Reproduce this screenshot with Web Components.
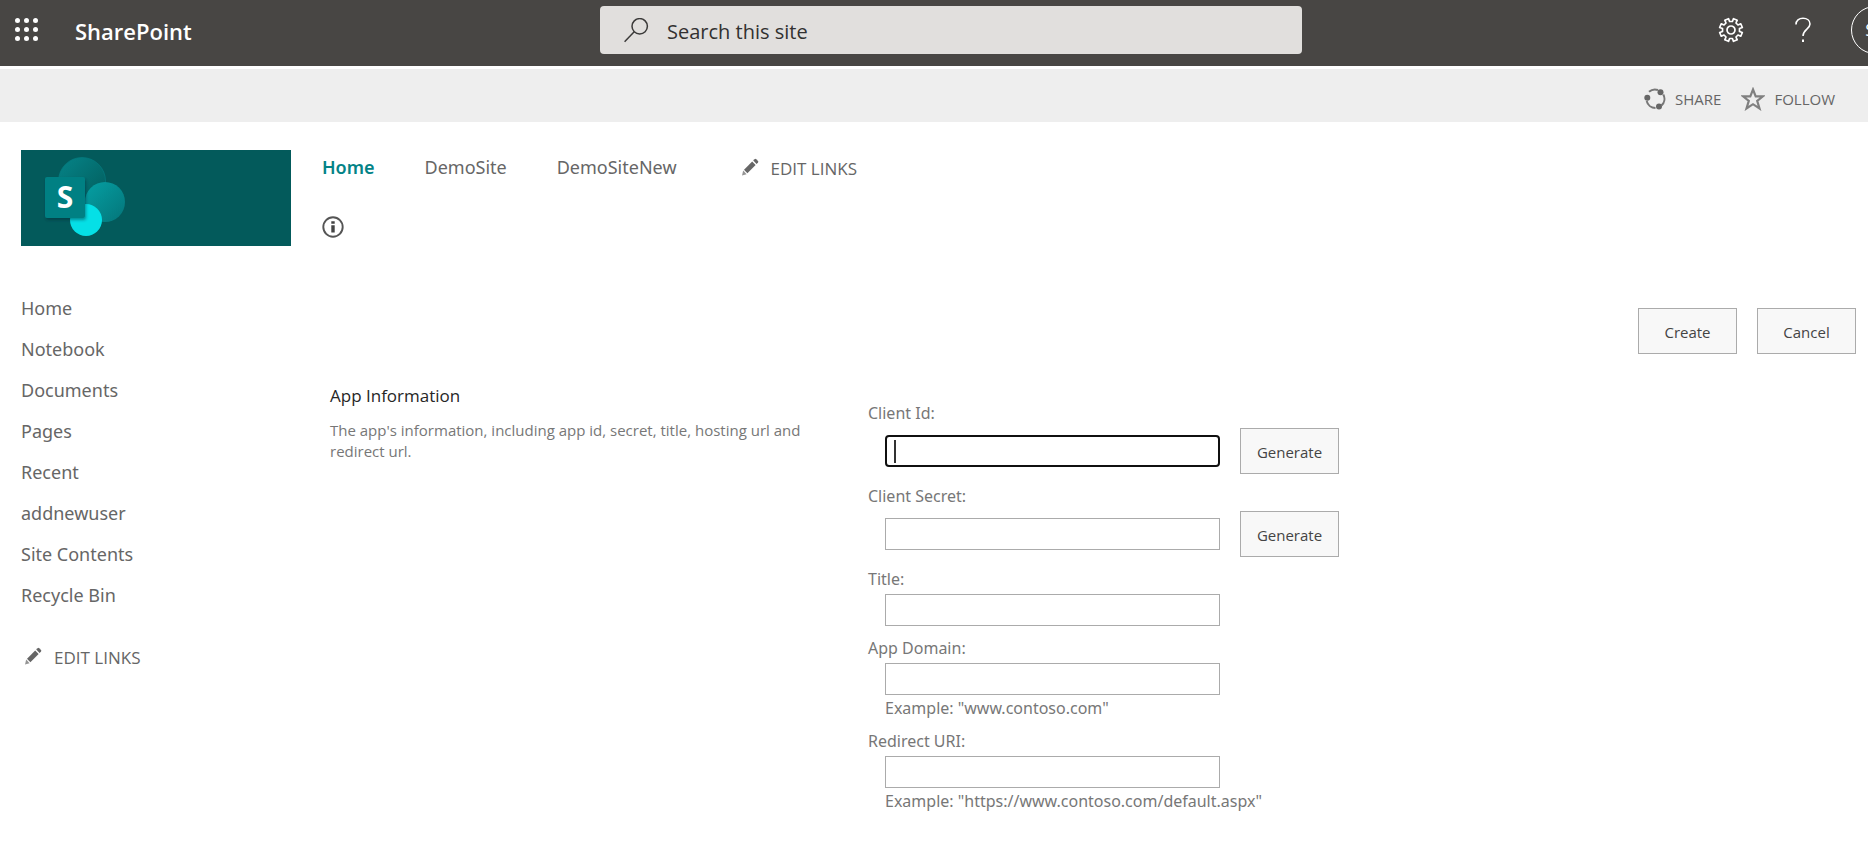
<!DOCTYPE html>
<html lang="en">
<head>
<meta charset="utf-8">
<title>SharePoint</title>
<style>
  body { margin: 0; background: #fff; color: #666; font-family: "Open Sans", "Noto Sans", sans-serif; font-size: 16px; line-height: 22px; }
</style>
</head>
<body>
<sp-page></sp-page>

<script>
const define = (name, html, setup) => {
  const template = document.createElement('template');
  template.innerHTML = '<style>*{box-sizing:border-box}a{color:inherit;text-decoration:none}button,input{font:inherit;color:inherit;margin:0}svg{display:block;flex:none}</style>' + html;
  customElements.define(name, class extends HTMLElement {
    constructor() {
      super();
      this.attachShadow({ mode: 'open' }).append(template.content.cloneNode(true));
    }
    connectedCallback() { if (setup) setup(this, this.shadowRoot); }
  });
};

define('sp-button', `
  <style>
    :host { display: block; font-family: "Open Sans", sans-serif; }
    button { display: block; width: 99px; height: 46px; padding: 2px 0 0; border: 1px solid #ababab; background: #f8f8f8; color: #444; font-size: 15px; line-height: 22px; }
  </style>
  <button type="button"><slot></slot></button>`);

define('sp-edit-links', `
  <style>
    :host { display: block; font-family: "Open Sans", sans-serif; font-size: 17px; line-height: 24px; }
    a { display: flex; align-items: center; gap: 12px; }
    svg { margin-bottom: 4px; }
  </style>
  <a href="#edit">
    <svg width="17" height="18" viewBox="0 0 17 18" fill="#666"><path d="M0 17.5 1.2 12.6 4.6 16.2Z" opacity=".7"/><path d="M2 11.7 10.2 3.6 13.6 7 5.4 15.2Z"/><path d="M11.2 2.6 12.6 1.2Q13.4.5 14.2 1.2L16 3Q16.7 3.8 16 4.6L14.6 6Z"/></svg>
    <span>EDIT LINKS</span>
  </a>`);

define('sp-field', `
  <style>
    :host { display: block; color: #777; font-family: "Noto Sans", sans-serif; }
    label { display: block; line-height: 22px; margin-bottom: 4px; }
    .row { display: flex; align-items: center; gap: 20px; padding-left: 17px; }
    input { display: block; width: 335px; height: 32px; padding: 0 8px; border: 1px solid #ababab; background: #fff; }
    :host([active]) input { border: 2px solid #101010; border-radius: 4px; caret-color: transparent; outline: 0;
      background: linear-gradient(#333, #333) 7px center / 2px 23px no-repeat #fff; }
    .hint { padding-left: 17px; margin-top: 2px; line-height: 22px; }
    .hint:empty { display: none; }
  </style>
  <label for="box"></label>
  <div class="row"><input id="box" type="text"><slot></slot></div>
  <div class="hint"></div>`,
  (host, root) => {
    root.querySelector('label').textContent = host.getAttribute('label');
    root.querySelector('.hint').textContent = host.getAttribute('hint') || '';
  });

define('sp-suite-bar', `
  <style>
    :host { display: grid; grid-template-columns: 600fr 702fr 566fr; align-items: center; height: 66px; background: #484644; color: #fff; overflow: hidden; }
    .brand { display: flex; align-items: center; padding: 0 0 6px 15px; gap: 36px; }
    .brand a { font-size: 22px; line-height: 30px; font-weight: 600; padding-top: 2px; }
    button { display: flex; align-items: center; justify-content: center; padding: 0; border: 0; background: none; }
    form { display: flex; align-items: center; gap: 18px; height: 48px; margin: 0 0 6px; padding: 0 24px; border-radius: 4px; background: #e1dfdd; color: #323130; }
    input { flex: 1; min-width: 0; height: 40px; padding: 2px 0 0; border: 0; outline: 0; background: none; font-size: 20px; }
    input::placeholder { color: #323130; opacity: 1; }
    .tools { display: flex; justify-content: flex-end; margin: 0 -43px 6px 0; }
    .tools button { width: 72px; height: 48px; }
    .avatar { width: 48px; height: 48px; border: 1px solid #fff; border-radius: 50%; font-size: 17px; line-height: 46px; text-align: center; }
  </style>
  <div class="brand">
    <button type="button" aria-label="App launcher"><svg width="24" height="24" viewBox="0 0 24 24" fill="#fff"><circle cx="2.5" cy="2.5" r="2.5"/><circle cx="11.5" cy="2.5" r="2.5"/><circle cx="20.5" cy="2.5" r="2.5"/><circle cx="2.5" cy="11.5" r="2.5"/><circle cx="11.5" cy="11.5" r="2.5"/><circle cx="20.5" cy="11.5" r="2.5"/><circle cx="2.5" cy="20.5" r="2.5"/><circle cx="11.5" cy="20.5" r="2.5"/><circle cx="20.5" cy="20.5" r="2.5"/></svg></button>
    <a href="#sharepoint">SharePoint</a>
  </div>
  <form role="search">
    <svg width="25" height="25" viewBox="0 0 25 25" fill="none" stroke="#3b3a39" stroke-width="1.5"><circle cx="15.7" cy="8.3" r="7.7"/><path d="M10.2 13.8.6 23.7"/></svg>
    <input type="search" aria-label="Search this site" placeholder="Search this site">
  </form>
  <div class="tools">
    <button type="button" aria-label="Settings"><svg id="gear" width="26" height="26" viewBox="-13 -13 26 26" fill="none" stroke="#fff" stroke-width="1.7" stroke-linejoin="round"><path/><circle r="4"/></svg></button>
    <button type="button" aria-label="Help"><svg width="16" height="26" viewBox="0 0 16 26" fill="none" stroke="#fff" stroke-width="1.6"><path d="M1 7.5C1 3.5 4 1.3 8 1.3S15 3.5 15 7C15 12 8 12.3 8 19"/><path d="M8 22.5V25" stroke-width="2"/></svg></button>
    <button type="button" aria-label="Account"><span class="avatar">SP</span></button>
  </div>`,
  (host, root) => {
    // Eight flat-topped teeth around the hub.
    const points = [];
    for (let i = 0; i < 8; i++) {
      for (const [offset, radius] of [[-13, 8.6], [-10, 11.6], [10, 11.6], [13, 8.6]]) {
        const angle = (i * 45 + 22.5 + offset) * Math.PI / 180;
        points.push((radius * Math.cos(angle)).toFixed(2) + ' ' + (radius * Math.sin(angle)).toFixed(2));
      }
    }
    root.querySelector('#gear path').setAttribute('d', 'M' + points.join('L') + 'Z');
  });

define('sp-ribbon', `
  <style>
    :host { display: flex; justify-content: flex-end; align-items: center; gap: 20px; height: 53px; margin-top: 3px; padding: 7px 33px 0 0; background: #eee; font-size: 15px; }
    a { display: flex; align-items: center; gap: 9px; }
  </style>
  <a href="#share"><svg width="22" height="22" viewBox="0 0 22 22" fill="none" stroke="#777" stroke-width="2"><path d="M5 3.8A9 9 0 0 1 14 2M19.3 6.5A9 9 0 0 1 17.5 17.5M11.5 20A9 9 0 0 1 2.7 13"/><g fill="#666" stroke="none"><circle cx="16.5" cy="4.2" r="3"/><circle cx="3.3" cy="9.7" r="3"/><circle cx="15" cy="18.5" r="3"/></g></svg><span>SHARE</span></a>
  <a href="#follow"><svg width="24" height="24" viewBox="0 0 24 24" fill="none" stroke="#808080" stroke-width="2.2"><path d="M12 2.5 14.7 9.3H22L16.2 13.9 18.5 21.5 12 17.2 5.5 21.5 7.8 13.9 2 9.3H9.3Z"/></svg><span>FOLLOW</span></a>`);

define('sp-logo', `
  <style>
    :host { display: block; height: 96px; background: #035a5b; }
    a { display: block; }
  </style>
  <a href="#home" aria-label="Site home">
    <svg width="110" height="96" viewBox="0 0 110 96">
      <defs>
        <linearGradient id="a" x1="0" y1="0" x2="1" y2="1"><stop stop-color="#058488"/><stop offset=".75" stop-color="#036566"/></linearGradient>
        <linearGradient id="b" x1="0" y1="0" x2="1" y2="1"><stop stop-color="#05a0a4"/><stop offset="1" stop-color="#047579"/></linearGradient>
        <filter id="s" x="-20%" y="-20%" width="150%" height="150%"><feDropShadow dx="1" dy="2" stdDeviation="1.5" flood-color="#023" flood-opacity=".45"/></filter>
      </defs>
      <circle cx="61" cy="31" r="23.5" fill="url(#a)" stroke="#047b7f" stroke-width=".7"/>
      <circle cx="84" cy="52" r="20" fill="url(#b)"/>
      <circle cx="65" cy="70" r="16" fill="#05e0e6"/>
      <rect x="24" y="27" width="40" height="41" rx="2" fill="#048083" filter="url(#s)"/>
      <text x="44" y="58" text-anchor="middle" font-size="30" font-weight="700" fill="#fff">S</text>
    </svg>
  </a>`);

define('sp-side-nav', `
  <style>
    :host { display: block; margin-top: 42px; font-family: "Noto Sans", sans-serif; font-size: 18px; line-height: 41px; }
    ul { margin: 0 0 30px; padding: 0; list-style: none; }
    sp-edit-links { padding-left: 4px; }
  </style>
  <nav>
    <ul>
      <li><a href="#home">Home</a></li><li><a href="#notebook">Notebook</a></li><li><a href="#documents">Documents</a></li><li><a href="#pages">Pages</a></li>
      <li><a href="#recent">Recent</a></li><li><a href="#addnewuser">addnewuser</a></li><li><a href="#contents">Site Contents</a></li><li><a href="#bin">Recycle Bin</a></li>
    </ul>
    <sp-edit-links></sp-edit-links>
  </nav>`);

define('sp-top-nav', `
  <style>
    :host { display: block; font-family: "Noto Sans", sans-serif; font-size: 18px; line-height: 24px; }
    nav { display: flex; align-items: flex-start; gap: 50px; padding-top: 5px; }
    nav a[aria-current] { color: #038387; font-weight: 600; }
    sp-edit-links { margin-left: 15px; padding-top: 2px; }
    button { display: block; margin-top: 35px; padding: 0; border: 0; background: none; }
  </style>
  <nav>
    <a href="#home" aria-current="page">Home</a><a href="#demosite">DemoSite</a><a href="#demositenew">DemoSiteNew</a>
    <sp-edit-links></sp-edit-links>
  </nav>
  <button type="button" aria-label="Page information"><svg width="22" height="22" viewBox="0 0 22 22"><circle cx="11" cy="11" r="9.7" fill="none" stroke="#555" stroke-width="1.9"/><path d="M9.3 5.2h3.4v2.6H9.3zM9.3 9.2h3.4v7.4H9.3z" fill="#444"/></svg></button>`);

define('sp-app-form', `
  <style>
    :host { display: block; margin-top: 70px; }
    .actions { display: flex; justify-content: flex-end; gap: 20px; }
    .section { display: grid; grid-template-columns: 480px 1fr; column-gap: 58px; padding-left: 8px; margin-top: 30px; }
    h2 { margin: 0 0 12px; font-size: 17px; font-weight: 400; line-height: 24px; color: #262626; }
    p { margin: 0; font-size: 15px; line-height: 21px; color: #777; }
    .fields { display: grid; row-gap: 11px; padding-top: 18px; }
  </style>
  <div class="actions"><sp-button>Create</sp-button><sp-button>Cancel</sp-button></div>
  <div class="section">
    <div><h2>App Information</h2><p>The app's information, including app id, secret, title, hosting url and redirect url.</p></div>
    <div class="fields">
      <sp-field label="Client Id:" active><sp-button>Generate</sp-button></sp-field>
      <sp-field label="Client Secret:"><sp-button>Generate</sp-button></sp-field>
      <sp-field label="Title:"></sp-field>
      <sp-field label="App Domain:" hint='Example: "www.contoso.com"'></sp-field>
      <sp-field label="Redirect URI:" hint='Example: "https://www.contoso.com/default.aspx"'></sp-field>
    </div>
  </div>`);

define('sp-page', `
  <style>
    :host { display: block; }
    .body { display: grid; grid-template-columns: 270px 1fr; column-gap: 31px; padding: 28px 12px 0 21px; }
  </style>
  <header><sp-suite-bar></sp-suite-bar><sp-ribbon></sp-ribbon></header>
  <div class="body">
    <aside><sp-logo></sp-logo><sp-side-nav></sp-side-nav></aside>
    <main><sp-top-nav></sp-top-nav><sp-app-form></sp-app-form></main>
  </div>`);
</script>
</body>
</html>
